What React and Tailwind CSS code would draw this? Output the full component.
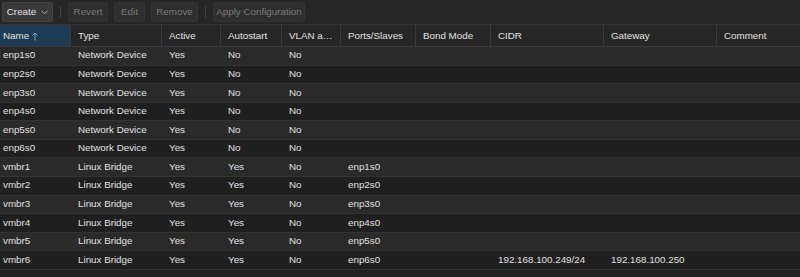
import React from "react";

const rows = [
  ["enp1s0", "Network Device", "Yes", "No", "No", "", "", "", "", ""],
  ["enp2s0", "Network Device", "Yes", "No", "No", "", "", "", "", ""],
  ["enp3s0", "Network Device", "Yes", "No", "No", "", "", "", "", ""],
  ["enp4s0", "Network Device", "Yes", "No", "No", "", "", "", "", ""],
  ["enp5s0", "Network Device", "Yes", "No", "No", "", "", "", "", ""],
  ["enp6s0", "Network Device", "Yes", "No", "No", "", "", "", "", ""],
  ["vmbr1", "Linux Bridge", "Yes", "Yes", "No", "enp1s0", "", "", "", ""],
  ["vmbr2", "Linux Bridge", "Yes", "Yes", "No", "enp2s0", "", "", "", ""],
  ["vmbr3", "Linux Bridge", "Yes", "Yes", "No", "enp3s0", "", "", "", ""],
  ["vmbr4", "Linux Bridge", "Yes", "Yes", "No", "enp4s0", "", "", "", ""],
  ["vmbr5", "Linux Bridge", "Yes", "Yes", "No", "enp5s0", "", "", "", ""],
  ["vmbr6", "Linux Bridge", "Yes", "Yes", "No", "enp6s0", "", "192.168.100.249/24", "192.168.100.250", ""],
];

const headers = ["Type", "Active", "Autostart", "VLAN a…", "Ports/Slaves", "Bond Mode", "CIDR", "Gateway", "Comment"];

const cols = "grid grid-cols-[70px_91px_59px_61px_59px_75px_75px_113px_113px_1fr]";

export default function App() {
  return (
    <div className="w-[800px] h-[277px] bg-[#232323] text-[#e0e0e0] overflow-hidden" style={{ fontFamily: '"Liberation Sans", Arial, sans-serif' }}>
      <div className="h-[25px] flex items-center gap-[6px] pl-[2px] border-b border-[#333] text-[9.8px] bg-[#262626]">
        <button className="h-[20px] w-[51px] flex items-center justify-center gap-[5px] rounded-[2px] bg-[#393939] border border-[#444] text-[#e0e0e0]">
          Create
          <svg width="7" height="5" viewBox="0 0 7 5"><path d="M0.5 0.8 L3.5 3.8 L6.5 0.8" fill="none" stroke="#aaa" strokeWidth="1" /></svg>
        </button>
        <div className="w-px h-[12px] bg-[#444] mx-[1px]" />
        <button className="h-[20px] w-[40px] rounded-[2px] bg-[#2e2e2e] border border-[#343434] text-[#7a7a7a]">Revert</button>
        <button className="h-[20px] w-[31px] rounded-[2px] bg-[#2e2e2e] border border-[#343434] text-[#7a7a7a]">Edit</button>
        <button className="h-[20px] w-[47px] rounded-[2px] bg-[#2e2e2e] border border-[#343434] text-[#7a7a7a]">Remove</button>
        <div className="w-px h-[12px] bg-[#444] mx-[1px]" />
        <button className="h-[20px] w-[92px] rounded-[2px] bg-[#2e2e2e] border border-[#343434] text-[#7a7a7a]">Apply Configuration</button>
      </div>
      <div className={`${cols} h-[22px] border-b border-[#3a3a3a] bg-[#262626] text-[9.8px] text-[#e2e2e2]`}>
        <div className="bg-[#1d3b55] flex items-center pl-[3px] pt-[1px] gap-[3px]">
          Name
          <svg width="6" height="9" viewBox="0 0 6 9"><path d="M3 8.5 V1 M0.6 3.4 L3 1 L5.4 3.4" fill="none" stroke="#8fb0cc" strokeWidth="0.9" /></svg>
        </div>
        {headers.map((h, i) => (
          <div key={i} className="flex items-center pl-[7px] pt-[1px] border-l border-[#3a3a3a] whitespace-nowrap overflow-hidden">{h}</div>
        ))}
      </div>
      {rows.map((r, i) => (
        <div key={i} className={`${cols} h-[18.58px] border-b border-[#333] text-[9.8px] ${i % 2 === 0 ? "bg-[#2a2a2a]" : "bg-[#1f1f1f]"}`}>
          {r.map((c, j) => (
            <div key={j} className={`flex items-center whitespace-nowrap overflow-hidden ${j === 0 ? "pl-[3px]" : "pl-[8px]"}`}>{c}</div>
          ))}
        </div>
      ))}
    </div>
  );
}
